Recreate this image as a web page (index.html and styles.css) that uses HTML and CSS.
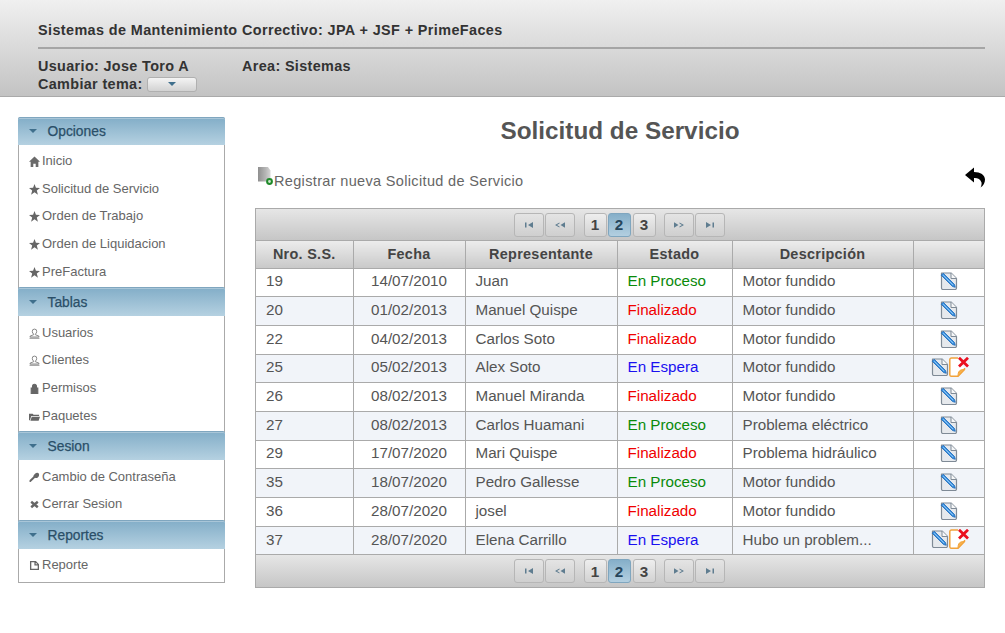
FILE: index.html
```html
<!DOCTYPE html>
<html lang="es">
<head>
<meta charset="utf-8">
<title>Solicitud de Servicio</title>
<link rel="stylesheet" href="styles.css">
</head>
<body>
<svg class="defs" width="0" height="0" aria-hidden="true">
  <defs>
    <linearGradient id="g-new" x1="0" y1="0" x2="1" y2="0"><stop offset="0" stop-color="#8f8f8f"/><stop offset=".6" stop-color="#b5b5b5"/><stop offset="1" stop-color="#d5d5d5"/></linearGradient>
  </defs>
  <symbol id="i-home" viewBox="0 0 10 10"><path d="M5 0.500 0 5.200h1.500V10h2.400V7h2.200v3h2.400V5.200H10Z" fill="#6a6a6a"/></symbol>
  <symbol id="i-star" viewBox="0 0 10 10"><path d="M5 0 6.300 3.500 10 3.700 7.100 6 8.100 9.700 5 7.600 1.900 9.700 2.900 6 0 3.700 3.700 3.500Z" fill="#666"/></symbol>
  <symbol id="i-user" viewBox="0 0 10 10"><path d="M5 1a2 2 0 0 1 2 2.200c0 1-.5 1.800-1.200 2.300v.6L9 7.400V8.200H1V7.400l3.200-1.300v-.6C3.500 5 3 4.200 3 3.200A2 2 0 0 1 5 1ZM.5 9.300h9" fill="none" stroke="#777" stroke-width=".8"/></symbol>
  <symbol id="i-lock" viewBox="0 0 10 10"><path d="M2 4.500h6V10H2Z M3.200 4.500V3a1.800 1.800 0 0 1 3.600 0v1.500" fill="#666" stroke="#666"/></symbol>
  <symbol id="i-folder" viewBox="0 0 12 10"><path d="M0 2h4l1 1h6v1.500H2.500L1 9H0ZM3 5.200h9L10.500 9.500H1.500Z" fill="#666"/></symbol>
  <symbol id="i-key" viewBox="0 0 10 10"><path d="M5.500 1.500c1-1 3-1 3.500 0s0 2.800-1 3.500-2 .6-2.500.2L1.500 9H.5V7.500L4 4.200c-.2-.8.6-1.800 1.500-2.700Z" fill="#666"/></symbol>
  <symbol id="i-close" viewBox="0 0 10 10"><path d="M2 2.500 8 7.500M8 2.500 2 7.500" stroke="#666" stroke-width="2.200"/></symbol>
  <symbol id="i-doc" viewBox="0 0 10 10"><path d="M1.500 1.500h4.500L8.500 4v4.500h-7ZM5.500 1.500V4.500H8.500" fill="none" stroke="#666" stroke-width="1.200"/></symbol>
  <symbol id="i-edit" viewBox="0 0 18 18">
    <path d="M1.500 1h9.500l5.500 5.500v9.500a1.500 1.500 0 0 1-1.500 1.500H3a1.500 1.500 0 0 1-1.500-1.500Z" fill="#e6e9ed" stroke="#7f8a96" stroke-width="1.200" stroke-linejoin="round"/>
    <path d="M11 1v5.500h5.500" fill="#f6f7f8" stroke="#7f8a96"/>
    <path d="M1.200 3.200 3.200 1.200 14.500 12.500 15.300 15.300 12.500 14.500Z" fill="#3a91e0" stroke="#1d68b8" stroke-width=".8" stroke-linejoin="round"/>
    <path d="M3.200 3.200 13 13" stroke="#a6d2f6" stroke-width=".8"/>
  </symbol>
  <symbol id="i-del" viewBox="0 0 20 20">
    <path d="M9 1H2.500A1.700 1.700 0 0 0 .8 2.700v15A1.700 1.700 0 0 0 2.500 19.300H9L15.500 12.500V11" fill="#fff" stroke="#f2a33c" stroke-width="1.500" stroke-linejoin="round"/>
    <path d="M9 19.300c0-5 1.500-6.800 6.500-6.800Z" fill="#f7b04a" stroke="#f2a33c"/>
    <path d="M10 .800 19 9.500M19 .800 10 9.500" stroke="#ea0f1f" stroke-width="2.800"/>
  </symbol>
  <symbol id="i-back" viewBox="0 0 20 21">
    <path d="M9 .500 0 8l9 7.500V11c3.500-.2 6.500 1 7.500 4.500.2 1 .1 3.300-1 5C18.500 18.800 20 15.500 20 12.500 20 8 15.500 5 9 5Z" fill="#000"/>
  </symbol>
  <symbol id="i-new" viewBox="0 0 15 18">
    <path d="M0 0h10l2.500 3.500V14.500H0Z" fill="url(#g-new)"/>
    <circle cx="11.500" cy="14.500" r="2.400" fill="#cfe8cf" stroke="#1f8a2a" stroke-width="2"/>
  </symbol>
  <symbol id="p-first" viewBox="0 0 12 8"><path d="M2 1.500h1.500v5H2ZM5 4l5-3v6Z"/></symbol>
  <symbol id="p-prev" viewBox="0 0 12 8"><path d="M1 4 5.500 1.500v1L3 4 5.500 5.500v1ZM6.500 4 11 1.200v5.600Z"/></symbol>
  <symbol id="p-next" viewBox="0 0 12 8"><path d="M1 1.200 5.500 4 1 6.800ZM6.500 1.500 11 4 6.500 6.500v-1L9 4 6.500 2.500Z"/></symbol>
  <symbol id="p-last" viewBox="0 0 12 8"><path d="M2 1l5 3-5 3ZM8.500 1.500H10v5H8.500Z"/></symbol>
</svg>

<header class="top">
  <h1 class="top-title">Sistemas de Mantenimiento Correctivo: JPA + JSF + PrimeFaces</h1>
  <hr class="top-rule">
  <div class="top-info">
    <div class="top-user">Usuario: Jose Toro A</div>
    <div>Area: Sistemas</div>
  </div>
  <div class="top-theme">Cambiar tema: <button class="theme-btn" type="button" aria-label="Cambiar tema"><span class="tri"></span></button></div>
</header>

<div class="layout">
  <nav class="menu">
    <div class="menu-head menu-head-first"><span class="tri"></span><span class="menu-label">Opciones</span></div>
    <ul class="menu-list">
      <li><svg class="mi"><use href="#i-home"/></svg>Inicio</li>
      <li><svg class="mi"><use href="#i-star"/></svg>Solicitud de Servicio</li>
      <li><svg class="mi"><use href="#i-star"/></svg>Orden de Trabajo</li>
      <li><svg class="mi"><use href="#i-star"/></svg>Orden de Liquidacion</li>
      <li><svg class="mi"><use href="#i-star"/></svg>PreFactura</li>
    </ul>
    <div class="menu-head"><span class="tri"></span><span class="menu-label">Tablas</span></div>
    <ul class="menu-list">
      <li><svg class="mi"><use href="#i-user"/></svg>Usuarios</li>
      <li><svg class="mi"><use href="#i-user"/></svg>Clientes</li>
      <li><svg class="mi"><use href="#i-lock"/></svg>Permisos</li>
      <li><svg class="mi"><use href="#i-folder"/></svg>Paquetes</li>
    </ul>
    <div class="menu-head"><span class="tri"></span><span class="menu-label">Sesion</span></div>
    <ul class="menu-list">
      <li><svg class="mi"><use href="#i-key"/></svg>Cambio de Contraseña</li>
      <li><svg class="mi"><use href="#i-close"/></svg>Cerrar Sesion</li>
    </ul>
    <div class="menu-head"><span class="tri"></span><span class="menu-label">Reportes</span></div>
    <ul class="menu-list">
      <li><svg class="mi"><use href="#i-doc"/></svg>Reporte</li>
    </ul>
  </nav>

  <main class="content">
    <h2 class="page-title">Solicitud de Servicio</h2>
    <div class="actions">
      <a class="new-link"><svg class="new-icon"><use href="#i-new"/></svg>Registrar nueva Solicitud de Servicio</a>
      <svg class="back-icon"><use href="#i-back"/></svg>
    </div>
    <div class="grid">
      <div class="pager">
        <span class="pg"><svg class="pgi"><use href="#p-first"/></svg></span>
        <span class="pg pg-sp"><svg class="pgi"><use href="#p-prev"/></svg></span>
        <span class="num">1</span><span class="num num-on">2</span><span class="num num-last">3</span>
        <span class="pg"><svg class="pgi"><use href="#p-next"/></svg></span>
        <span class="pg"><svg class="pgi"><use href="#p-last"/></svg></span>
      </div>
      <table class="tbl">
        <colgroup><col class="c1"><col class="c2"><col class="c3"><col class="c4"><col class="c5"><col class="c6"></colgroup>
        <thead>
          <tr><th>Nro. S.S.</th><th>Fecha</th><th>Representante</th><th>Estado</th><th>Descripción</th><th></th></tr>
        </thead>
        <tbody>
          <tr><td>19</td><td class="ctr">14/07/2010</td><td>Juan</td><td class="proc">En Proceso</td><td>Motor fundido</td><td class="ctr"><svg class="ed"><use href="#i-edit"/></svg></td></tr>
          <tr class="alt"><td>20</td><td class="ctr">01/02/2013</td><td>Manuel Quispe</td><td class="fin">Finalizado</td><td>Motor fundido</td><td class="ctr"><svg class="ed"><use href="#i-edit"/></svg></td></tr>
          <tr><td>22</td><td class="ctr">04/02/2013</td><td>Carlos Soto</td><td class="fin">Finalizado</td><td>Motor fundido</td><td class="ctr"><svg class="ed"><use href="#i-edit"/></svg></td></tr>
          <tr class="alt"><td>25</td><td class="ctr">05/02/2013</td><td>Alex Soto</td><td class="esp">En Espera</td><td>Motor fundido</td><td class="ctr"><svg class="ed"><use href="#i-edit"/></svg><svg class="dl"><use href="#i-del"/></svg></td></tr>
          <tr><td>26</td><td class="ctr">08/02/2013</td><td>Manuel Miranda</td><td class="fin">Finalizado</td><td>Motor fundido</td><td class="ctr"><svg class="ed"><use href="#i-edit"/></svg></td></tr>
          <tr class="alt"><td>27</td><td class="ctr">08/02/2013</td><td>Carlos Huamani</td><td class="proc">En Proceso</td><td>Problema eléctrico</td><td class="ctr"><svg class="ed"><use href="#i-edit"/></svg></td></tr>
          <tr><td>29</td><td class="ctr">17/07/2020</td><td>Mari Quispe</td><td class="fin">Finalizado</td><td>Problema hidráulico</td><td class="ctr"><svg class="ed"><use href="#i-edit"/></svg></td></tr>
          <tr class="alt"><td>35</td><td class="ctr">18/07/2020</td><td>Pedro Gallesse</td><td class="proc">En Proceso</td><td>Motor fundido</td><td class="ctr"><svg class="ed"><use href="#i-edit"/></svg></td></tr>
          <tr><td>36</td><td class="ctr">28/07/2020</td><td>josel</td><td class="fin">Finalizado</td><td>Motor fundido</td><td class="ctr"><svg class="ed"><use href="#i-edit"/></svg></td></tr>
          <tr class="alt"><td>37</td><td class="ctr">28/07/2020</td><td>Elena Carrillo</td><td class="esp">En Espera</td><td>Hubo un problem...</td><td class="ctr"><svg class="ed"><use href="#i-edit"/></svg><svg class="dl"><use href="#i-del"/></svg></td></tr>
        </tbody>
      </table>
      <div class="pager pager-bottom">
        <span class="pg"><svg class="pgi"><use href="#p-first"/></svg></span>
        <span class="pg pg-sp"><svg class="pgi"><use href="#p-prev"/></svg></span>
        <span class="num">1</span><span class="num num-on">2</span><span class="num num-last">3</span>
        <span class="pg"><svg class="pgi"><use href="#p-next"/></svg></span>
        <span class="pg"><svg class="pgi"><use href="#p-last"/></svg></span>
      </div>
    </div>
  </main>
</div>
</body>
</html>
```
FILE: styles.css
```css
* { box-sizing: border-box; }
html, body { margin: 0; padding: 0; }
body {
  font-family: "Liberation Sans", Arial, sans-serif;
  color: #555;
  background: #fff;
  overflow: hidden;
}
.defs { position: absolute; }

/* header */
.top {
  height: 97px;
  padding: 21px 20px 0 38px;
  background: linear-gradient(#f0f0f0, #c3c3c3);
  border-bottom: 1px solid #aaa;
  color: #333;
  font-weight: bold;
}
.top-title { margin: 0; font-size: 14.4px; line-height: 18px; letter-spacing: .4px; }
.top-rule { margin: 8px 0 0; border: 0; height: 2px; background: #a5a5a5; }
.top-info { display: flex; margin-top: 8px; font-size: 14.4px; line-height: 18px; letter-spacing: .35px; }
.top-user { width: 204px; }
.top-theme { display: flex; align-items: center; font-size: 14.4px; line-height: 18px; letter-spacing: .35px; gap: 4px; }
.theme-btn {
  width: 50px; height: 15px; padding: 0;
  display: flex; align-items: center; justify-content: center;
  background: linear-gradient(#f4f4f4, #d2d2d2);
  border: 1px solid #b0b0b0; border-radius: 3px;
}
.tri {
  display: inline-block; width: 0; height: 0;
  border-left: 4px solid transparent; border-right: 4px solid transparent;
  border-top: 4px solid #3f6f8c;
}

/* layout */
.layout { display: flex; align-items: flex-start; padding: 20px 20px 0 18px; }

/* menu */
.menu {
  width: 207px; flex: none;
  border: 1px solid #aaa; border-top: 0; border-radius: 3px 3px 0 0;
  padding-bottom: 1px;
  font-size: 13px;
}
.menu-head {
  height: 29px;
  display: flex; align-items: center;
  padding-left: 11px;
  margin: 0 -1px;
  background: linear-gradient(#83aec8, #b5d1e1);
  border-top: 1px solid #7fa6bf;
  box-shadow: inset 0 1px 0 #a9c6d8;
  color: #2a4f68;
  font-size: 13.8px;
  -webkit-text-stroke: .25px #2a4f68;
  border-radius: 2px 2px 0 0;
}
.menu-head-first { height: 28px; padding-bottom: 1px; }
.menu-label { margin-left: 10.5px; }
.menu-list { list-style: none; margin: 0; padding: 2px 0 2.5px 10px; color: #666; }
.menu-list li { height: 27.6px; display: flex; align-items: center; }
.mi { width: 11px; height: 11px; margin-right: 2px; flex: none; margin-top: 2px; }

/* content */
.content { flex: 1; margin-left: 30px; margin-right: 0; min-width: 0; }
.page-title { margin: 0; height: 28px; text-align: center; font-size: 24.3px; line-height: 28px; color: #555; font-weight: bold; }
.actions { display: flex; justify-content: space-between; align-items: flex-start; height: 63px; padding-top: 20px; padding-left: 3px; }
.new-link { display: flex; align-items: flex-end; font-size: 14.5px; color: #666; letter-spacing: .34px; height: 25px; line-height: 18px; }
.new-icon { width: 15px; height: 18px; margin-right: 1px; margin-bottom: 5px; flex: none; }
.back-icon { width: 20px; height: 21px; margin-top: 2px; }

/* data table */
.grid { border: 1px solid #aaa; width: 730px; }
.pager {
  height: 32px;
  display: flex; align-items: center; justify-content: center;
  background: linear-gradient(#e6e6e6, #c6c6c6);
  border-bottom: 1px solid #aaa;
  gap: 1px;
  padding-right: 2px;
}
.pager-bottom { height: 32px; border-bottom: 0; }
.pg {
  width: 30px; height: 24px;
  display: flex; align-items: center; justify-content: center;
  background: linear-gradient(#e4e4e4, #cfcfcf);
  border: 1px solid #b6b6b6; border-radius: 3px;
}
.pg-sp { margin-right: 8px; }
.pgi { width: 12px; height: 8px; fill: #5f7d90; }
.num {
  width: 23px; height: 24px;
  display: flex; align-items: center; justify-content: center;
  background: linear-gradient(#eeeeee, #d2d2d2);
  border: 1px solid #b6b6b6; border-radius: 3px;
  font-weight: bold; font-size: 15.2px; color: #444;
}
.num-on { background: linear-gradient(#85afc9, #b3cfe0); border-color: #7fa6bf; color: #26465c; margin-right: 1px; }
.num-last { margin-right: 7px; }

.tbl { width: 100%; table-layout: fixed; border-collapse: collapse; font-size: 15.2px; }
.c1 { width: 97px; } .c2 { width: 112px; } .c3 { width: 152px; }
.c4 { width: 115px; } .c5 { width: 181px; } .c6 { width: 71px; }
.tbl th {
  height: 27px; padding: 0 0 1px;
  background: linear-gradient(#ececec, #c9c9c9);
  border-left: 1px solid #aaa; border-bottom: 1px solid #aaa;
  font-size: 14.4px; letter-spacing: .3px; color: #444;
}
.tbl td {
  height: 28.7px; padding: 0 10px 3px;
  border-left: 1px solid #aaa; border-bottom: 1px solid #aaa;
  white-space: nowrap; overflow: hidden;
}
.tbl th:first-child, .tbl td:first-child { border-left: 0; }
.alt td { background: #f1f4f9; }
.ctr { text-align: center; }
td.ctr { padding: 0 0 3px; }
.proc { color: #0a8a0a; }
.fin { color: #f00000; }
.esp { color: #1a10f0; }
.ed { width: 18px; height: 18px; vertical-align: middle; }
.dl { width: 20px; height: 20px; vertical-align: middle; margin-right: -2px; }
```
